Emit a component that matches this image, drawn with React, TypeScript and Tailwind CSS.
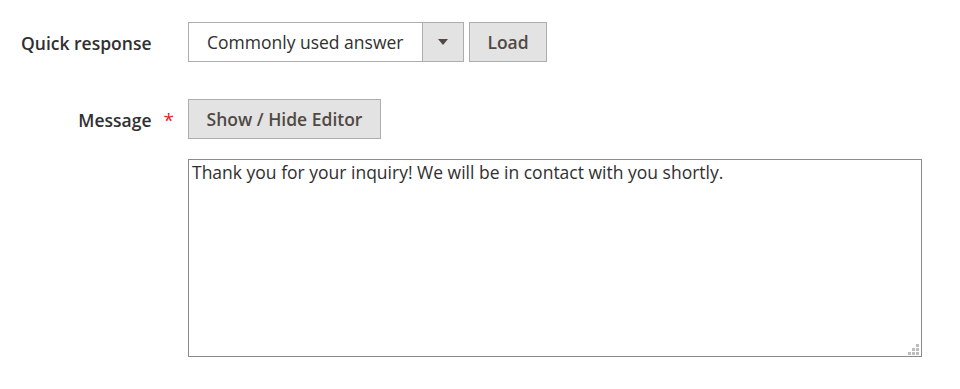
import React, { useState } from 'react';

const App: React.FC = () => {
  const [message, setMessage] = useState('Thank you for your inquiry! We will be in contact with you shortly.');

  return (
    <div className="min-h-screen bg-white text-[#303030] font-['Open_Sans',sans-serif] text-[17.5px]">
      <div className="pt-[22px]">
        {/* quick response row */}
        <div className="flex items-start">
          <label className="w-[188px] pl-[21px] pt-[2px] h-[40px] flex items-center font-semibold">Quick response</label>
          <div className="flex gap-[5px]">
            <div className="flex h-[40px] w-[276px] border border-[#adadad] bg-white">
              <div className="flex-1 flex items-center pl-[18px]">Commonly used answer</div>
              <div className="w-[41px] border-l border-[#adadad] bg-[#e3e3e3] flex items-center justify-center">
                <svg width="10" height="6" viewBox="0 0 10 6"><path d="M0 0h10L5 6z" fill="#514943" /></svg>
              </div>
            </div>
            <button className="h-[40px] w-[78px] border border-[#adadad] bg-[#e3e3e3] font-semibold text-[#514943]">Load</button>
          </div>
        </div>

        {/* message row */}
        <div className="flex items-start mt-[37px]">
          <div className="w-[188px] h-[40px] pt-[3px] flex items-center justify-end pr-[14px]">
            <span className="font-semibold">Message</span>
            <span className="ml-[12px] text-[#e22626] text-[19px] leading-none">*</span>
          </div>
          <div className="flex flex-col">
            <button className="self-start h-[40px] w-[193px] border border-[#adadad] bg-[#e3e3e3] font-semibold text-[#514943]">Show / Hide Editor</button>
            <div className="relative mt-[20px]">
              <textarea
                className="block w-[734px] h-[198px] border border-[#8a8a8a] px-[3px] py-[1px] leading-[1.35] text-[#303030] outline-none resize-none"
                value={message}
                onChange={(e) => setMessage(e.target.value)}
              />
              <svg className="absolute right-[3px] bottom-[2px]" width="11" height="11" viewBox="0 0 11 11" fill="#bdbdbd">
                <rect x="8" y="0" width="3" height="3" />
                <rect x="4" y="4" width="3" height="3" />
                <rect x="8" y="4" width="3" height="3" />
                <rect x="0" y="8" width="3" height="3" />
                <rect x="4" y="8" width="3" height="3" />
                <rect x="8" y="8" width="3" height="3" />
              </svg>
            </div>
          </div>
        </div>
      </div>
    </div>
  );
};

export default App;
